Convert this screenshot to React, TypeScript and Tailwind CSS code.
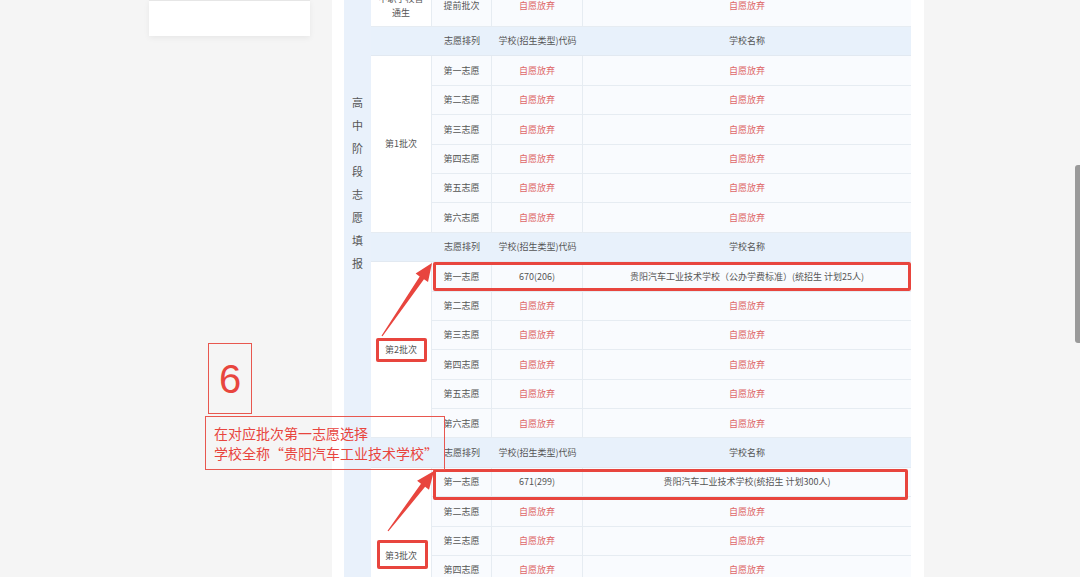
const FONT = { fontFamily: '"Noto Sans CJK SC", "Noto Sans", sans-serif' };

type Row = { label: string; code: string; name: string };
type Batch = { batch: string[]; header: boolean; rowH: string; rows: Row[] };

const GIVE_UP = "自愿放弃";
const ORDER = ["第一志愿", "第二志愿", "第三志愿", "第四志愿", "第五志愿", "第六志愿"];

const emptyRows = (first?: Row): Row[] =>
  ORDER.map((label, i) =>
    i === 0 && first ? first : { label, code: GIVE_UP, name: GIVE_UP }
  );

const batches: Batch[] = [
  {
    batch: ["中职学校普", "通生"],
    header: false,
    rowH: "h-[42px]",
    rows: [{ label: "提前批次", code: GIVE_UP, name: GIVE_UP }],
  },
  { batch: ["第1批次"], header: true, rowH: "h-[29.4px]", rows: emptyRows() },
  {
    batch: ["第2批次"],
    header: true,
    rowH: "h-[29.4px]",
    rows: emptyRows({
      label: "第一志愿",
      code: "670(206)",
      name: "贵阳汽车工业技术学校（公办学费标准）(统招生 计划25人)",
    }),
  },
  {
    batch: ["第3批次"],
    header: true,
    rowH: "h-[29.4px]",
    rows: emptyRows({
      label: "第一志愿",
      code: "671(299)",
      name: "贵阳汽车工业技术学校(统招生 计划300人)",
    }),
  },
];

const valueClass = (v: string) =>
  v === GIVE_UP ? "text-[#de6767]" : "text-[#555]";

// tapered arrow, tail -> tip
const arrowPoints = (tx: number, ty: number, px: number, py: number) => {
  const len = Math.hypot(px - tx, py - ty);
  const dx = (px - tx) / len;
  const dy = (py - ty) / len;
  const nx = -dy;
  const ny = dx;
  const bx = px - dx * 18;
  const by = py - dy * 18;
  const pts = [
    [tx + nx * 0.6, ty + ny * 0.6],
    [bx + nx * 2.6, by + ny * 2.6],
    [bx + nx * 7.5, by + ny * 7.5],
    [px, py],
    [bx - nx * 7.5, by - ny * 7.5],
    [bx - nx * 2.6, by - ny * 2.6],
    [tx - nx * 0.6, ty - ny * 0.6],
  ];
  return pts.map((p) => p.join(",")).join(" ");
};

const App = () => {
  return (
    <div
      className="relative flex h-[577px] w-[1080px] overflow-hidden bg-[#f5f5f5]"
      style={FONT}
    >
      {/* left side card */}
      <div className="ml-[149px] h-[36px] w-[161px] border-t border-[#e6e6e6] bg-white shadow-[0_2px_6px_rgba(0,0,0,0.06)]" />

      {/* main panel */}
      <div className="ml-[22px] h-full w-[592px] bg-white pl-[12px] pr-[13px]">
        <div className="-mt-[15px] flex text-[9px] text-[#555]">
          {/* 高中阶段志愿填报 */}
          <div className="flex w-[27px] shrink-0 flex-col items-center bg-[#e9f1fb] pt-[106px] text-[11px] leading-[23px] text-[#555]">
            {"高中阶段志愿填报".split("").map((c, i) => (
              <span key={i}>{c}</span>
            ))}
          </div>

          <div className="flex flex-1 flex-col">
            {batches.map((b, bi) => (
              <div key={bi} className="flex flex-col">
                {b.header && (
                  <div className="flex h-[29.4px] border-b border-[#e2e9f1] bg-[#e8f1fb]">
                    <div className="w-[61px] shrink-0" />
                    <div className="flex w-[60px] shrink-0 items-center justify-center">
                      志愿排列
                    </div>
                    <div className="flex w-[91px] shrink-0 items-center justify-center">
                      学校(招生类型)代码
                    </div>
                    <div className="flex flex-1 items-center justify-center">
                      学校名称
                    </div>
                  </div>
                )}
                <div className="flex">
                  <div className="flex w-[61px] shrink-0 flex-col items-center justify-center border-r border-b border-[#e6ecf2] bg-white leading-[14px]">
                    {b.batch.map((t) => (
                      <span key={t}>{t}</span>
                    ))}
                  </div>
                  <div className="flex flex-1 flex-col">
                    {b.rows.map((r, ri) => (
                      <div
                        key={ri}
                        className={`flex ${b.rowH} border-b border-[#e6ecf2] bg-[#f9fbfe]`}
                      >
                        <div
                          className={`flex w-[60px] shrink-0 justify-center border-r border-[#e6ecf2] ${
                            bi === 0 ? "items-start pt-[14px]" : "items-center"
                          }`}
                        >
                          {r.label}
                        </div>
                        <div
                          className={`flex w-[91px] shrink-0 justify-center border-r border-[#e6ecf2] ${valueClass(
                            r.code
                          )} ${bi === 0 ? "items-start pt-[14px]" : "items-center"}`}
                        >
                          {r.code}
                        </div>
                        <div
                          className={`flex flex-1 justify-center ${valueClass(
                            r.name
                          )} ${bi === 0 ? "items-start pt-[14px]" : "items-center"}`}
                        >
                          {r.name}
                        </div>
                      </div>
                    ))}
                  </div>
                </div>
              </div>
            ))}
          </div>
        </div>
      </div>

      {/* annotation boxes */}
      <div className="absolute left-[433px] top-[262px] h-[29px] w-[478px] rounded-[2px] border-[3px] border-[#e8453e]" />
      <div className="absolute left-[433px] top-[469px] h-[31px] w-[475px] rounded-[2px] border-[3px] border-[#e8453e]" />
      <div className="absolute left-[376px] top-[338px] h-[24px] w-[51px] rounded-[2px] border-[3px] border-[#e8453e]" />
      <div className="absolute left-[377px] top-[540px] h-[29px] w-[51px] rounded-[2px] border-[3px] border-[#e8453e]" />

      <svg
        className="pointer-events-none absolute left-0 top-0"
        width={1080}
        height={577}
        viewBox="0 0 1080 577"
      >
        <polygon points={arrowPoints(382, 336, 432, 263)} fill="#e8453e" />
        <polygon points={arrowPoints(388, 531, 434, 471)} fill="#e8453e" />
      </svg>

      {/* step number */}
      <div className="absolute left-[208px] top-[343px] flex h-[71px] w-[44px] items-center justify-center border border-[#e8574f]">
        <span
          className="text-[40px] leading-none text-[#e8453e]"
          style={{ fontFamily: '"Liberation Sans", sans-serif' }}
        >
          6
        </span>
      </div>
      <div className="absolute left-[205px] top-[416px] flex h-[54px] w-[240px] flex-col justify-center border border-[#e8574f] pl-[8px] text-[14px] leading-[20px] text-[#e8453e]">
        <span>在对应批次第一志愿选择</span>
        <span>学校全称“贵阳汽车工业技术学校”</span>
      </div>

      {/* scrollbar */}
      <div className="absolute left-[1075px] top-[165px] h-[178px] w-[5px] rounded-l-[3px] bg-[#9a9a9a]" />
    </div>
  );
};

export default App;
